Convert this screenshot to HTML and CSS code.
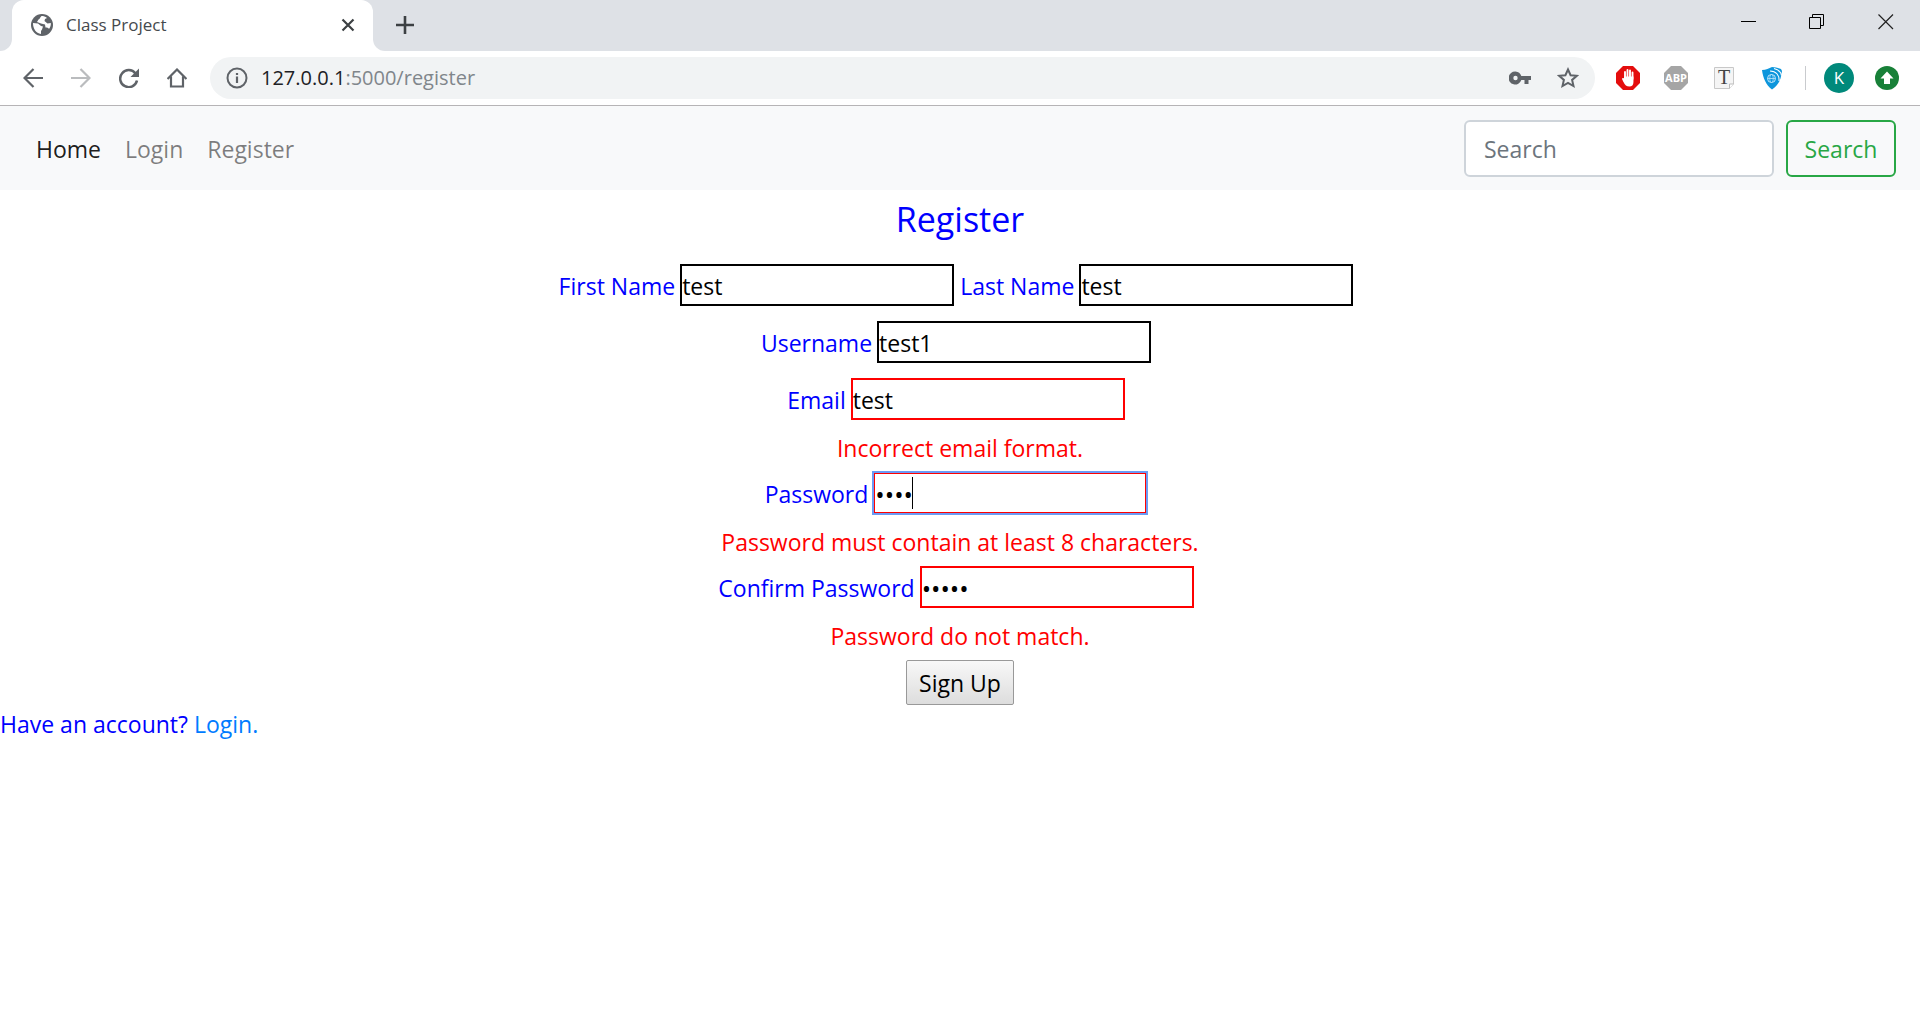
FILE: index.html
```html
<!DOCTYPE html>
<html lang="en">
<head>
<meta charset="utf-8">
<title>Class Project</title>
<link rel="stylesheet" href="styles.css">
</head>
<body>
<header class="browser">
  <div class="tabstrip">
    <div class="edge"></div>
    <div class="tab">
      <svg class="globe" width="22" height="22" viewBox="0 0 22 22"><circle cx="11" cy="11" r="11" fill="#5f6368"/><path d="M2 9l5 .500 3 2.500 2 .500-1 3-1 1.500v3C5 19 2 15 2 9z" fill="#fff"/><path d="M10.500 2C9 3 9 5 7.500 5.500L6 8l4 1.500 4 1 .5 3c1.500 0 3 0 3.500 1.500 1.500-2 2-4 1.800-6l-3.300.500-3-2.500.500-2 2-1c-1.500-1.500-3.500-2-5.500-2z" fill="#fff"/></svg>
      <span class="tab-title">Class Project</span>
      <button class="icon-btn tab-close" aria-label="Close tab"><svg width="14" height="14" viewBox="0 0 14 14"><path d="M1.500 1.500l11 11M12.500 1.500l-11 11" stroke="#3c4043" stroke-width="2.200"/></svg></button>
    </div>
    <div class="strip-rest">
      <button class="icon-btn" aria-label="New tab"><svg width="18" height="18" viewBox="0 0 18 18"><path d="M9 0v18M0 9h18" stroke="#3c4043" stroke-width="2.600"/></svg></button>
      <div class="window-controls">
        <button class="icon-btn" aria-label="Minimize"><svg width="16" height="16" viewBox="0 0 16 16"><path d="M1 7.500h15" stroke="#000"/></svg></button>
        <button class="icon-btn" aria-label="Restore"><svg width="16" height="16" viewBox="0 0 16 16" fill="none" stroke="#000"><path d="M.5 3.500h11v11H.5zM3.500 3V.5h11v11H12"/></svg></button>
        <button class="icon-btn" aria-label="Close"><svg width="16" height="16" viewBox="0 0 16 16"><path d="M.5.5l14.500 14.500M15 .5L.5 15" stroke="#222" stroke-width="1.200"/></svg></button>
      </div>
    </div>
  </div>
  <div class="toolbar">
    <div class="nav-buttons">
      <button class="icon-btn" aria-label="Back"><svg width="20" height="20" viewBox="0 0 20 20" fill="none" stroke="#5f6368" stroke-width="2.200"><path d="M20 10H1.500M10.500 1L1.500 10l9 9"/></svg></button>
      <button class="icon-btn" aria-label="Forward"><svg width="20" height="20" viewBox="0 0 20 20" fill="none" stroke="#babcbe" stroke-width="2.200"><path d="M0 10h18.500M9.500 1l9 9-9 9"/></svg></button>
      <button class="icon-btn" aria-label="Reload"><svg width="20" height="20" viewBox="0 0 20 20"><path d="M16.500 5.500A8.500 8.500 0 1 0 18 12.500" fill="none" stroke="#5f6368" stroke-width="2.500"/><path d="M20 .5V9h-8.500z" fill="#5f6368"/></svg></button>
      <button class="icon-btn" aria-label="Home page"><svg width="20" height="20" viewBox="0 0 20 20" fill="none" stroke="#5f6368" stroke-width="2.200"><path d="M.5 11L10 1.500 19.500 11M4 8.500V18.500h12V8.500"/></svg></button>
    </div>
    <div class="omnibox">
      <svg width="22" height="22" viewBox="0 0 22 22"><circle cx="11" cy="11" r="9.500" fill="none" stroke="#5f6368" stroke-width="2"/><path d="M11 9.500V16M11 6v2" stroke="#5f6368" stroke-width="2.200"/></svg>
      <div class="url"><span class="host">127.0.0.1</span>:5000/register</div>
      <svg width="22" height="14" viewBox="0 0 22 14"><path fill="#5f6368" fill-rule="evenodd" d="M6.500.5a6.500 6.500 0 1 0 5.800 8.500H15.500v4h4V9H22V5H12.300A6.500 6.500 0 0 0 6.500.5zm0 4.300a2.200 2.200 0 1 1 0 4.400 2.200 2.200 0 0 1 0-4.400z"/></svg>
      <svg width="22" height="22" viewBox="0 0 22 22"><path d="M11 2.500l2.600 5.700 6.200.6-4.700 4.100 1.400 6.100L11 15.800 5.500 19l1.400-6.100L2.200 8.800l6.200-.6z" fill="none" stroke="#5f6368" stroke-width="2"/></svg>
    </div>
    <div class="extensions">
      <svg width="24" height="24" viewBox="0 0 24 24"><path d="M7 0h10l7 7v10l-7 7H7l-7-7V7z" fill="#e40d0d"/><path d="M9 13V6M11.500 12V4M14 12V4.500M16.500 13V6.500" stroke="#fff" stroke-width="1.900" stroke-linecap="round"/><path d="M8 10.500h9.450v5.500c0 3-1.500 4.500-4 4.500-3 0-4.500-1.500-6-4.500L6 13c0-1 1-1.300 2-.5z" fill="#fff"/></svg>
      <svg width="24" height="24" viewBox="0 0 24 24"><path d="M7 0h10l7 7v10l-7 7H7l-7-7V7z" fill="#a5a5a5"/><text x="12" y="16" text-anchor="middle" class="abp">ABP</text></svg>
      <svg width="24" height="24" viewBox="-2 0 24 24"><path d="M.5 1.500h19V18l-4 4.500H.5z" fill="#f5f5f5" stroke="#c8c8c8"/><path d="M15.500 22.500V18h4" fill="#fff" stroke="#bbb"/><text x="10" y="18" text-anchor="middle" class="tee">T</text></svg>
      <svg width="24" height="24" viewBox="-2 0 24 24"><path d="M0 4C4 4 7 2 10 1c3 0 6 1 9 2l1 2C19 14 16 20 10 23.500 4 19 1 12 0 4z" fill="#0d96dc"/><path d="M8 5c6 0 9.500 4 9 10M12 2.500c4 1 7 3.500 7.500 7" fill="none" stroke="#fff" stroke-width="1.100"/><circle cx="9.500" cy="12.500" r="4" fill="none" stroke="#bfe6fb"/><ellipse cx="9.500" cy="12.500" rx="1.800" ry="4" fill="none" stroke="#bfe6fb" stroke-width=".7"/><path d="M5.500 12.500h8" stroke="#bfe6fb" stroke-width=".8"/></svg>
      <div class="separator"></div>
      <div class="avatar">K</div>
      <svg width="24" height="24" viewBox="0 0 24 24"><circle cx="12" cy="12" r="12" fill="#188038"/><path d="M12 5.500l6.500 7H15V18H9v-5.500H5.500z" fill="#fff"/></svg>
    </div>
  </div>
</header>
<nav class="navbar">
  <div class="links">
    <a class="active" href="#">Home</a>
    <a href="#">Login</a>
    <a href="#">Register</a>
  </div>
  <form class="search">
    <input type="search" placeholder="Search" aria-label="Search">
    <button type="button">Search</button>
  </form>
</nav>
<main>
  <form class="register">
    <h1>Register</h1>
    <div class="row">
      <label for="first">First Name</label><input id="first" type="text" value="test">
      <label for="last">Last Name</label><input id="last" type="text" value="test">
    </div>
    <div class="row"><label for="user">Username</label><input id="user" type="text" value="test1"></div>
    <div class="row"><label for="email">Email</label><input id="email" class="invalid" type="text" value="test"></div>
    <p class="error">Incorrect email format.</p>
    <div class="row"><label for="pass">Password</label><span class="field"><input id="pass" class="invalid current" type="password" value="test"><span class="caret"></span></span></div>
    <p class="error">Password must contain at least 8 characters.</p>
    <div class="row"><label for="confirm">Confirm Password</label><input id="confirm" class="invalid" type="password" value="test1"></div>
    <p class="error">Password do not match.</p>
    <button class="submit" type="button">Sign Up</button>
  </form>
  <p class="account">Have an account? <a href="#">Login.</a></p>
</main>
</body>
</html>
```
FILE: styles.css
```css
* { box-sizing: border-box; }
body {
  margin: 0;
  background: #fff;
  font: 23px/36px "Open Sans", "Noto Sans", sans-serif;
  color: #00f;
}
a { text-decoration: none; color: #007bff; }
input, button { font: inherit; }
svg { display: block; flex: none; }
.icon-btn { display: flex; padding: 0; border: 0; background: none; }

/* Browser window */
.browser { border-bottom: 1px solid #b6b4b6; }
.tabstrip { display: flex; height: 51px; background: #fff; }
.edge { width: 12px; background: #dee1e6; border-radius: 0 0 12px 0; }
.tab {
  display: flex;
  align-items: center;
  width: 361px;
  padding: 0 18px 2px 19px;
  background: linear-gradient(#dee1e6, #dee1e6) 0 0 / 100% 12px no-repeat;
  position: relative;
  z-index: 0;
}
.tab::before {
  content: "";
  position: absolute;
  inset: 0;
  z-index: -1;
  border-radius: 12px 12px 0 0;
  background: #fff;
}
.tab-title { flex: 1; margin-left: 13px; font-size: 17px; color: #45494d; }
.strip-rest {
  display: flex;
  flex: 1;
  justify-content: space-between;
  padding: 0 26px 2px 23px;
  align-items: center;
  background: #dee1e6;
  border-radius: 0 0 0 12px;
}
.window-controls { display: flex; gap: 53px; padding-bottom: 6px; }
.toolbar { display: flex; align-items: center; height: 54px; padding: 0 21px 0 23px; }
.nav-buttons { display: flex; align-items: center; gap: 28px; }
.omnibox {
  display: flex;
  flex: 1;
  align-items: center;
  gap: 26px;
  height: 42px;
  margin: 0 21px 0 23px;
  padding: 0 16px;
  border-radius: 21px;
  background: #f1f3f4;
}
.url { flex: 1; margin-left: -13px; font-size: 20px; color: #80868b; }
.host { color: #202124; }
.extensions { display: flex; align-items: center; gap: 24px; }
.abp { font: bold 11px "Open Sans", sans-serif; fill: #fff; }
.tee { font: 20px "Liberation Serif", serif; fill: #444; }
.separator { width: 1px; height: 24px; margin-left: -3px; background: #c9cbce; }
.avatar {
  width: 30px;
  height: 30px;
  margin: 0 -3px 0 -6px;
  border-radius: 50%;
  background: #00897b;
  color: #fff;
  font-size: 17px;
  line-height: 30px;
  text-align: center;
}

/* Site navigation */
.navbar {
  display: flex;
  align-items: center;
  justify-content: space-between;
  height: 84px;
  padding: 0 24px;
  background: #f8f9fa;
}
.links { display: flex; }
.links a { padding: 14px 12px 12px; color: rgba(0, 0, 0, .5); }
.links .active { color: rgba(0, 0, 0, .9); }
.search { display: flex; gap: 12px; }
.search input, .search button { height: 57px; border-radius: 6px; padding: 2px 16px 0; }
.search input { width: 310px; padding-left: 18px; border: 2px solid #ced4da; background: #fff; }
.search input::placeholder { color: #6c757d; opacity: 1; }
.search button { width: 110px; border: 2px solid #28a745; color: #28a745; background: none; text-align: center; }

/* Registration form */
.register { display: flex; flex-direction: column; align-items: center; }
h1 { margin: 0 0 23px; padding-top: 7px; font-size: 34px; line-height: 44px; font-weight: 400; }
.row { display: flex; gap: 6px; margin: 0 8px 15px 0; height: 42px; }
.row label { margin-right: -1px; line-height: 45px; }
.row input {
  width: 274px;
  height: 42px;
  padding: 2px 0 0;
  border: 2px solid #000;
  border-radius: 0;
  background: #fff;
  color: #000;
}
.row input[type="password"] { font-size: 25px; }
.row .invalid { border-color: #f00; }
.row .current { outline: 2px solid #6a9bf5; outline-offset: -1px; }
.field { display: flex; position: relative; }
.caret { position: absolute; left: 39px; top: 5px; width: 1px; height: 32px; background: #000; }
.error { margin: -5px 0 6px; color: #f00; }
.submit {
  width: 108px;
  height: 45px;
  padding: 0;
  border: 1px solid #999;
  border-radius: 2px;
  background: linear-gradient(#f8f8f8, #ddd);
  color: #000;
}
.account { margin: 1px 0 0; }
```
